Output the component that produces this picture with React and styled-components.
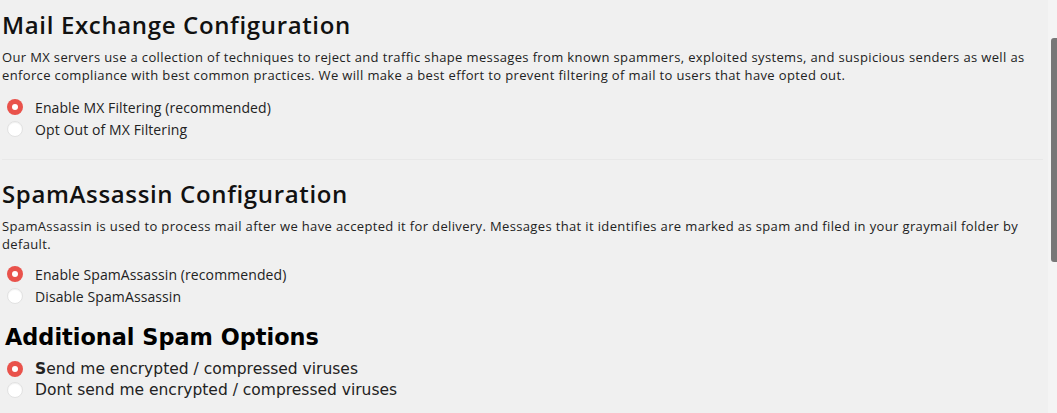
import React from 'react';
import styled, { createGlobalStyle } from 'styled-components';

const GlobalStyle = createGlobalStyle`
  html, body {
    margin: 0;
    padding: 0;
    background: #f0f0f0;
  }
  body {
    font-family: "Open Sans", "Liberation Sans", sans-serif;
    color: #1f1f1f;
  }
`;

const Frame = styled.div`
  display: flex;
  height: 413px;
  overflow: hidden;
`;

const Content = styled.main`
  flex: 1;
  min-width: 0;
  padding: 10px 5px 0 2px;
`;

const Section = styled.section`
  padding-bottom: ${p => p.$pad || 0}px;
  border-bottom: ${p => (p.$divider ? '1px solid #e8e8e8' : 'none')};
  margin-bottom: ${p => p.$after || 0}px;
`;

const Title = styled.h2`
  margin: 0;
  font-size: 24px;
  line-height: 30px;
  font-weight: 600;
  letter-spacing: 0.65px;
  color: #111;
`;

const Legacy = styled.h2`
  margin: 0;
  font-family: "DejaVu Sans", sans-serif;
  font-size: 22.4px;
  line-height: 28px;
  font-weight: 700;
  color: #000;
  padding-left: 3px;
`;

const Blurb = styled.p`
  margin: 8px 0 0;
  font-size: 13px;
  line-height: 18px;
  letter-spacing: 0.36px;
  color: #222;
`;

const Choices = styled.div`
  display: flex;
  flex-direction: column;
  margin-top: ${p => p.$top}px;
`;

const Choice = styled.label`
  display: flex;
  align-items: center;
  height: ${p => p.$row}px;
  font-size: ${p => p.$size}px;
  letter-spacing: ${p => (p.$legacy ? 0 : 0.1)}px;
  font-family: ${p => (p.$legacy ? '"DejaVu Sans", sans-serif' : 'inherit')};
  color: #222;
  cursor: pointer;
`;

const Dot = styled.span`
  box-sizing: border-box;
  flex: none;
  width: 16px;
  height: 16px;
  margin: 0 12px 0 5px;
  border-radius: 50%;
  background: ${p => (p.$on ? '#e9524b' : '#fff')};
  border: ${p => (p.$on ? 'none' : '1px solid #e2e2e2')};
  box-shadow: ${p => (p.$on ? 'none' : 'inset 0 1px 1px rgba(0,0,0,0.06)')};
  display: flex;
  align-items: center;
  justify-content: center;
  &::after {
    content: '';
    display: ${p => (p.$on ? 'block' : 'none')};
    width: 6px;
    height: 6px;
    border-radius: 50%;
    background: #fff;
  }
`;

const Rail = styled.aside`
  flex: none;
  width: 9px;
  background: #f4f4f4;
  display: flex;
  justify-content: flex-end;
`;

const Thumb = styled.div`
  width: 6px;
  height: 224px;
  margin-top: 38px;
  background: #777;
  border-radius: 3px 0 0 3px;
`;

function Option({ on, children, row = 22, size = 14, legacy }) {
  return (
    <Choice $row={row} $size={size} $legacy={legacy}>
      <Dot $on={on} />
      <span>{children}</span>
    </Choice>
  );
}

export default function App() {
  return (
    <>
      <GlobalStyle />
      <Frame>
        <Content>
          <Section $divider $pad={19} $after={19}>
            <Title>Mail Exchange Configuration</Title>
            <Blurb>
              Our MX servers use a collection of techniques to reject and traffic shape messages from known
              spammers, exploited systems, and suspicious senders as well as enforce compliance with best common
              practices. We will make a best effort to prevent filtering of mail to users that have opted out.
            </Blurb>
            <Choices $top={12}>
              <Option on>Enable MX Filtering (recommended)</Option>
              <Option>Opt Out of MX Filtering</Option>
            </Choices>
          </Section>

          <Section $after={16}>
            <Title>SpamAssassin Configuration</Title>
            <Blurb>
              SpamAssassin is used to process mail after we have accepted it for delivery. Messages that it
              identifies are marked as spam and filed in your graymail folder by default.
            </Blurb>
            <Choices $top={10}>
              <Option on>Enable SpamAssassin (recommended)</Option>
              <Option>Disable SpamAssassin</Option>
            </Choices>
          </Section>

          <Section>
            <Legacy>Additional Spam Options</Legacy>
            <Choices $top={7}>
              <Option on row={21} size={15.5} legacy>
                <b>S</b>end me encrypted / compressed viruses
              </Option>
              <Option row={21} size={15.5} legacy>
                Dont send me encrypted / compressed viruses
              </Option>
            </Choices>
          </Section>
        </Content>
        <Rail>
          <Thumb />
        </Rail>
      </Frame>
    </>
  );
}
